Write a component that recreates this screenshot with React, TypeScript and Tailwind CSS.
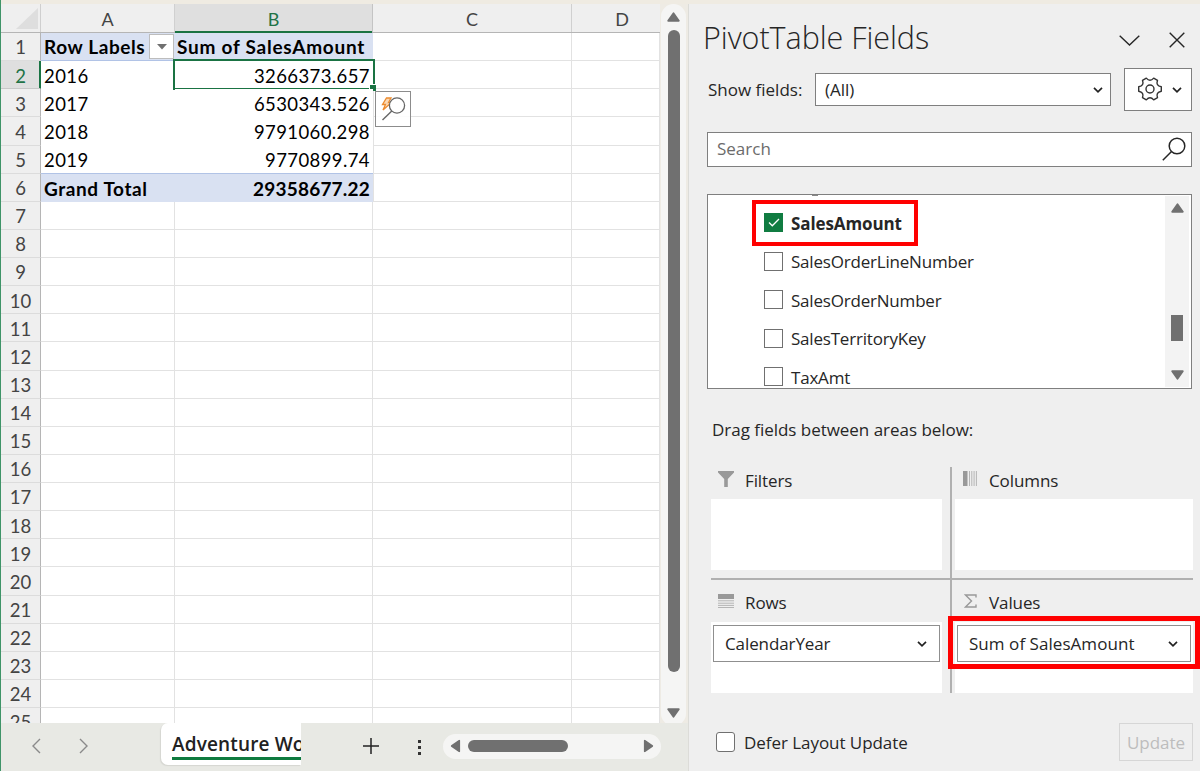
import type { ReactNode } from 'react'
import clsx from 'clsx'

type SheetRow = { label: string; value: string }

const pivotRows: SheetRow[] = [
  { label: 'Row Labels', value: 'Sum of SalesAmount' },
  { label: '2016', value: '3266373.657' },
  { label: '2017', value: '6530343.526' },
  { label: '2018', value: '9791060.298' },
  { label: '2019', value: '9770899.74' },
  { label: 'Grand Total', value: '29358677.22' },
]

const rowNumbers = Array.from({ length: 25 }, (_, i) => i + 1)

const fields = [
  { name: 'SalesAmount', checked: true, tracking: 'tracking-[-0.1px]' },
  { name: 'SalesOrderLineNumber', checked: false, tracking: 'tracking-[-0.2px]' },
  { name: 'SalesOrderNumber', checked: false, tracking: 'tracking-[-0.2px]' },
  { name: 'SalesTerritoryKey', checked: false, tracking: 'tracking-[-0.2px]' },
  { name: 'TaxAmt', checked: false, tracking: 'tracking-[-0.2px]' },
]

function Triangle({ className }: { className?: string }) {
  return (
    <svg viewBox="0 0 13 10" className={clsx('h-[10px] w-[13px] shrink-0', className)}>
      <path
        d="M6.5 1.2 L11.8 8.8 H1.2 Z"
        fill="#707070"
        stroke="#707070"
        strokeWidth="1.8"
        strokeLinejoin="round"
      />
    </svg>
  )
}

function SmallChevron({ className }: { className?: string }) {
  return (
    <svg viewBox="0 0 10 6" fill="none" className={clsx('h-[6px] w-[10px] shrink-0', className)}>
      <path d="M1 0.8 L5 4.8 L9 0.8" stroke="#222" strokeWidth="1.7" />
    </svg>
  )
}

function SheetHeader() {
  return (
    <div className="flex h-[29px] shrink-0 border-b border-[#b5b5b5] bg-[#efefef] text-[18px] text-[#444]">
      <div className="flex w-10 items-end justify-end border-r border-[#cfcfcf] pb-[3px] pr-[2px]">
        <svg viewBox="0 0 22 21" className="h-[21px] w-[22px]">
          <path d="M22 0 V21 H0 Z" fill="#dedede" />
        </svg>
      </div>
      <div className="flex w-[134px] items-center justify-center border-r border-[#d0d0d0] pt-[3px]">A</div>
      <div className="relative flex w-[198px] items-center justify-center border-r border-[#c4c4c4] bg-[#dfdfdf] pt-[3px] text-[#217346]">
        B
        <div className="absolute inset-x-0 -bottom-px h-[2px] bg-[#1a7343]" />
      </div>
      <div className="flex w-[199px] items-center justify-center border-r border-[#d0d0d0] pt-[3px]">C</div>
      <div className="flex flex-1 items-center justify-center pl-[12px] pt-[3px]">D</div>
    </div>
  )
}

function SheetLine({ n }: { n: number }) {
  const row = pivotRows[n - 1]
  const bold = n === 1 || n === 6
  const selected = n === 2

  const cellBorder = clsx(
    'border-b',
    !row && 'border-[#e2e2e2]',
    (n === 1 || n === 5) && 'border-[#b1c3e6]',
    n === 6 && 'border-[#d9e1f2]',
    n > 1 && n < 5 && 'border-white',
    bold ? 'bg-[#d9e1f2] text-[19px] font-bold' : 'bg-white tracking-[0.4px]',
    n === 1 ? 'pt-[2px]' : 'pt-[3.5px]',
  )

  return (
    <div className="flex h-[28.13px] shrink-0 text-[18.5px] text-black">
      <div
        className={clsx(
          'flex w-10 items-center justify-center border-b border-r',
          n === 1 ? 'pt-[2px]' : 'pt-[3.5px]',
          selected
            ? 'border-b-[#c8c8c8] border-r-[#1a7343] bg-[#dfdfdf] text-[#217346] shadow-[inset_-1px_0_0_#1a7343]'
            : 'border-b-[#dcdcdc] border-r-[#b5b5b5] bg-[#efefef] text-[#444]',
        )}
      >
        {n}
      </div>
      <div
        className={clsx(
          'flex w-[134px] items-center justify-between pl-[3px]',
          cellBorder,
          !row && 'border-r',
        )}
      >
        {row && <span className={clsx('whitespace-nowrap', bold && 'tracking-[0.6px]')}>{row.label}</span>}
        {n === 1 && (
          <div className="-mt-[2px] mr-px flex h-[25px] w-[25px] shrink-0 items-center justify-center border border-[#bdbdbd] bg-white">
            <svg viewBox="0 0 10 6" className="h-[6px] w-[10px]">
              <path d="M0 0 H10 L5 5.5 Z" fill="#707070" />
            </svg>
          </div>
        )}
      </div>
      <div
        className={clsx(
          'relative flex w-[198px] items-center',
          cellBorder,
          !row && 'border-r',
          n === 1 ? 'pl-[2px]' : 'justify-end pr-[3px]',
        )}
      >
        {row && (
          <span
            className={clsx('whitespace-nowrap', n === 1 && 'tracking-[0.75px]', n === 6 && 'tracking-[0.2px]')}
          >
            {row.value}
          </span>
        )}
        {selected && (
          <div className="absolute -bottom-[2px] -left-[2px] -right-[2px] -top-[2px] border-2 border-[#1a7343]">
            <div className="absolute -bottom-[3px] -right-[3px] h-[7px] w-[7px] border-l border-t border-white bg-[#1a7343]" />
          </div>
        )}
      </div>
      <div className={clsx('w-[199px] border-b border-r border-[#e2e2e2]', row && n !== 1 && 'border-l')} />
      <div className="flex-1 border-b border-r border-[#e2e2e2]" />
    </div>
  )
}

function QuickAnalysis() {
  return (
    <div className="absolute left-[374px] top-[87px] flex h-[36px] w-[36px] items-center justify-center border-[1.5px] border-[#8c8c8c] bg-white/90">
      <svg viewBox="0 0 34 34" fill="none" className="h-[34px] w-[34px]">
        <path d="M10.5 6 H15 L12.5 10.5 H15.5 L7 18 L9.5 12.5 H6.5 Z" fill="#fbd9b5" stroke="#ec8b2f" strokeWidth="1.3" />
        <circle cx="21" cy="13.5" r="7.6" fill="#fff" stroke="#666" strokeWidth="1.3" />
        <path d="M15.8 19 L6.5 28" stroke="#666" strokeWidth="1.4" />
      </svg>
    </div>
  )
}

function SheetTabs() {
  return (
    <div className="flex h-12 shrink-0 bg-[#e8e9e4]">
      <div className="flex w-[160px] items-center gap-[38px] pb-[2px] pl-[30px]">
        <svg viewBox="0 0 10 16" fill="none" className="h-4 w-[10px]">
          <path d="M9 1 L2 8 L9 15" stroke="#8a8a8a" strokeWidth="1.4" />
        </svg>
        <svg viewBox="0 0 10 16" fill="none" className="h-4 w-[10px]">
          <path d="M1 1 L8 8 L1 15" stroke="#8a8a8a" strokeWidth="1.4" />
        </svg>
      </div>
      <div className="h-[42px] w-[140px] overflow-hidden rounded-bl-[7px] rounded-tl-[7px] bg-white pl-[11px] pt-[8px] shadow-[-1px_1px_1px_#d5d6d1]">
        <div className="h-[29px] whitespace-nowrap border-b-[3px] border-[#0f7b3f] font-['Open_Sans',sans-serif] text-[19px] font-semibold leading-[26px] tracking-[0.15px] text-[#222]">
          Adventure Works
        </div>
      </div>
      <div className="flex flex-1 items-start pl-[61px]">
        <svg viewBox="0 0 18 18" className="mt-[14px] h-[18px] w-[18px]">
          <path d="M9 1 V17 M1 9 H17" stroke="#222" strokeWidth="1.5" />
        </svg>
        <div className="ml-[38px] mt-[17px] flex flex-col gap-[3px]">
          <span className="h-[3px] w-[3px] bg-[#333]" />
          <span className="h-[3px] w-[3px] bg-[#333]" />
          <span className="h-[3px] w-[3px] bg-[#333]" />
        </div>
        <div className="ml-[22px] mt-[11px] flex h-[25px] w-[218px] items-center rounded-full bg-[#f5f5f4] pb-px pl-[6px] pr-[6px]">
          <Triangle className="-rotate-90" />
          <div className="ml-[6px] h-[12px] w-[100px] rounded-full bg-[#707070]" />
          <Triangle className="ml-auto rotate-90" />
        </div>
      </div>
    </div>
  )
}

function Spreadsheet() {
  return (
    <div className="flex w-[687px] flex-col bg-[#e8e9e4] font-[Lato,sans-serif]">
      <div className="flex h-[719px] shrink-0 bg-[#eeebe4]">
        <div className="relative flex w-[659px] flex-col overflow-hidden bg-white">
          <SheetHeader />
          {rowNumbers.map((n) => (
            <SheetLine key={n} n={n} />
          ))}
          <QuickAnalysis />
        </div>
        <div className="ml-px flex h-[722px] w-[25px] flex-col items-center rounded-full bg-[#f5f5f4] pb-[8px] pt-[8px]">
          <Triangle />
          <div className="mt-[8px] h-[642px] w-[12px] rounded-full bg-[#707070]" />
          <Triangle className="mt-auto rotate-180" />
        </div>
      </div>
      <SheetTabs />
    </div>
  )
}

function FieldList() {
  return (
    <div className="relative ml-[18px] mt-[27px] flex h-[195px] w-[485px] border-[1.5px] border-[#7f7f7f] bg-white">
      <div className="relative flex-1 overflow-hidden">
        {/* descender of the row scrolled out above */}
        <div className="absolute left-[104px] top-0 h-px w-[6px] bg-[#888]" />
        <div className="flex flex-col pl-[56px] pt-[9.5px]">
          {fields.map((f) => (
            <label key={f.name} className="flex h-[38.5px] shrink-0 items-center">
              <span
                className={clsx(
                  '-mt-[2px] flex h-[19px] w-[19px] items-center justify-center',
                  f.checked ? 'bg-[#107c41]' : 'border-[1.5px] border-[#707070] bg-white',
                )}
              >
                {f.checked && (
                  <svg viewBox="0 0 12 9" fill="none" className="h-[9px] w-[12px]">
                    <path d="M1 4.5 L4.3 7.8 L11 1" stroke="#fff" strokeWidth="1.3" />
                  </svg>
                )}
              </span>
              <span className={clsx('-mt-px ml-[8px]', f.tracking, f.checked && 'font-bold')}>{f.name}</span>
            </label>
          ))}
        </div>
      </div>
      <div className="my-px mr-[2px] flex w-[24px] flex-col items-center bg-[#f3f3f3] pb-[7px] pt-[7px]">
        <Triangle />
        <div className="mt-[102px] h-[26px] w-[12px] bg-[#707070]" />
        <Triangle className="mt-auto rotate-180" />
      </div>
      <div className="absolute left-[44px] top-[5px] h-[46px] w-[166px] border-4 border-[#ff0000]" />
    </div>
  )
}

function AreaTitle({ icon, children }: { icon: ReactNode; children: ReactNode }) {
  return (
    <div className="flex items-center">
      <div className="-mt-[5px] flex w-[18px] shrink-0 justify-center">{icon}</div>
      <span className="ml-[10px] tracking-[-0.1px]">{children}</span>
    </div>
  )
}

function AreaItem({ children, className }: { children: ReactNode; className?: string }) {
  return (
    <div className={clsx('flex h-[37px] items-center border-[1.5px] border-[#8f8f8f] bg-white pl-[11px]', className)}>
      {children}
      <SmallChevron className="ml-auto mr-[12px]" />
    </div>
  )
}

function Areas() {
  return (
    <div className="ml-[22px] mt-[24px] flex w-[482px]">
      <div className="w-[241px] border-r-2 border-[#b0b0b0]">
        <div className="flex h-[113px] flex-col border-b-2 border-[#b0b0b0]">
          <div className="flex h-[32px] items-center pb-[4px] pl-[6px]">
            <AreaTitle
              icon={
                <svg viewBox="0 0 18 18" className="h-[18px] w-[18px]">
                  <path d="M1 1 H17 V2.5 L10.8 9 V17 H7.2 V9 L1 2.5 Z" fill="#999" />
                </svg>
              }
            >
              Filters
            </AreaTitle>
          </div>
          <div className="h-[71px] w-[231px] bg-white" />
        </div>
        <div className="flex h-[42px] items-center pl-[6px] pt-[4px]">
          <AreaTitle
            icon={
              <svg viewBox="0 0 16 14" className="h-[14px] w-[16px]">
                <path d="M0 0 H16 V5 H0 Z" fill="#999" />
                <path d="M0 6.8 H16 M0 9.2 H16 M0 11.4 H16 M0 13.5 H16" stroke="#b5b5b5" />
              </svg>
            }
          >
            Rows
          </AreaTitle>
        </div>
        <div className="h-[71px] w-[231px] bg-white pl-[2px] pt-[3px]">
          <AreaItem className="w-[227px] tracking-[-0.1px]">CalendarYear</AreaItem>
        </div>
      </div>
      <div className="flex-1">
        <div className="flex h-[113px] flex-col border-b-2 border-[#b0b0b0]">
          <div className="flex h-[32px] items-center pb-[4px] pl-[9px]">
            <AreaTitle
              icon={
                <svg viewBox="0 0 14 15" className="h-[15px] w-[14px]">
                  <path d="M0 0 H4.5 V15 H0 Z" fill="#999" />
                  <path d="M6.5 0 V15 M8.8 0 V15 M11.1 0 V15 M13.4 0 V15" stroke="#b5b5b5" />
                </svg>
              }
            >
              Columns
            </AreaTitle>
          </div>
          <div className="ml-[3px] h-[71px] bg-white" />
        </div>
        <div className="flex h-[42px] items-center pl-[9px] pt-[4px]">
          <AreaTitle
            icon={
              <svg viewBox="0 0 13 14" fill="none" className="h-[14px] w-[13px]">
                <path d="M12 3.5 V1 H1.5 L7.5 7 L1.5 13 H12 V10.5" stroke="#999" strokeWidth="1.4" />
              </svg>
            }
          >
            Values
          </AreaTitle>
        </div>
        <div className="relative ml-[3px] h-[71px] bg-white pl-[2px] pt-[3px]">
          <AreaItem className="w-[234px] tracking-[0.05px]">Sum of SalesAmount</AreaItem>
          <div className="absolute -left-[7px] -top-[6px] h-[53px] w-[252px] border-[5px] border-[#ff0000]" />
        </div>
      </div>
    </div>
  )
}

function FieldsPane() {
  return (
    <div className="flex w-[512px] shrink-0 flex-col border-l border-[#dcdcd8] bg-[#efefef] font-['Open_Sans',sans-serif] text-[17px] text-[#262626]">
      <div className="flex h-[64px] shrink-0 items-center pl-[14px] pt-[3px]">
        <h1 className="whitespace-nowrap text-[30.5px] font-light tracking-[-0.05px]">PivotTable Fields</h1>
        <svg viewBox="0 0 21 11" fill="none" className="ml-auto mt-[5px] h-[11px] w-[21px]">
          <path d="M0.7 0.7 L10.5 10 L20.3 0.7" stroke="#262626" strokeWidth="1.4" />
        </svg>
        <svg viewBox="0 0 16 16" fill="none" className="ml-[29px] mr-[15px] mt-[4px] h-4 w-4">
          <path d="M0.7 0.7 L15.3 15.3 M15.3 0.7 L0.7 15.3" stroke="#262626" strokeWidth="1.4" />
        </svg>
      </div>

      <div className="flex h-[43px] shrink-0 items-center pl-[19px]">
        <span className="w-[107px] whitespace-nowrap pt-px">Show fields:</span>
        <div className="flex h-[33px] w-[296px] items-center border-[1.5px] border-[#7f7f7f] bg-white pl-[9px]">
          <span>(All)</span>
          <SmallChevron className="ml-auto mr-[7px]" />
        </div>
        <div className="ml-[13px] flex h-[43px] w-[68px] items-center border-[1.5px] border-[#7f7f7f] bg-white pl-[13px]">
          <svg viewBox="0 0 24 24" fill="none" className="mb-[2px] h-[24px] w-[24px]">
            <path
              d="M23.3 9.8 V14.2 Q17.6 15.25 19.5 20.7 L15.7 22.9 Q12 18.5 8.3 22.9 L4.5 20.7 Q6.4 15.25 0.7 14.2 V9.8 Q6.4 8.75 4.5 3.3 L8.3 1.1 Q12 5.5 15.7 1.1 L19.5 3.3 Q17.6 8.75 23.3 9.8 Z"
              stroke="#333"
              strokeWidth="1.4"
              strokeLinejoin="round"
            />
            <circle cx="12" cy="12" r="4" stroke="#333" strokeWidth="1.4" />
          </svg>
          <SmallChevron className="ml-[10px]" />
        </div>
      </div>

      <div className="ml-[18px] mt-[21px] flex h-[35px] w-[485px] shrink-0 items-center border-[1.5px] border-[#7f7f7f] bg-white pb-[2px] pl-[9px] pr-[5px] text-[#6b6b6b]">
        <span>Search</span>
        <svg viewBox="0 0 24 24" fill="none" className="ml-auto h-[24px] w-[24px]">
          <circle cx="15" cy="9" r="7.8" stroke="#262626" strokeWidth="1.5" />
          <path d="M9.5 14.5 L0.8 23.2" stroke="#262626" strokeWidth="1.5" />
        </svg>
      </div>

      <FieldList />

      <p className="ml-[23px] mt-[28px] h-[26px] leading-[26px] tracking-[-0.03px]">Drag fields between areas below:</p>

      <Areas />

      <div className="ml-[27px] mt-[30px] flex h-[38px] w-[477px] items-center">
        <span className="h-[20px] w-[19px] rounded-[3px] border-[1.5px] border-[#707070] bg-white" />
        <span className="ml-[9px] pt-[2px] tracking-[-0.05px]">Defer Layout Update</span>
        <div className="ml-auto flex h-[38px] w-[74px] items-center justify-center border-[1.5px] border-[#d6d6d6] pt-[2px] text-[#bdbdbd]">
          Update
        </div>
      </div>
    </div>
  )
}

export default function App() {
  return (
    <div className="flex h-[771px] w-[1200px] flex-col overflow-hidden border-l border-[#3f9468] bg-[#efebe2]">
      <div className="h-1 shrink-0" />
      <div className="flex h-[767px]">
        <Spreadsheet />
        <FieldsPane />
      </div>
    </div>
  )
}
